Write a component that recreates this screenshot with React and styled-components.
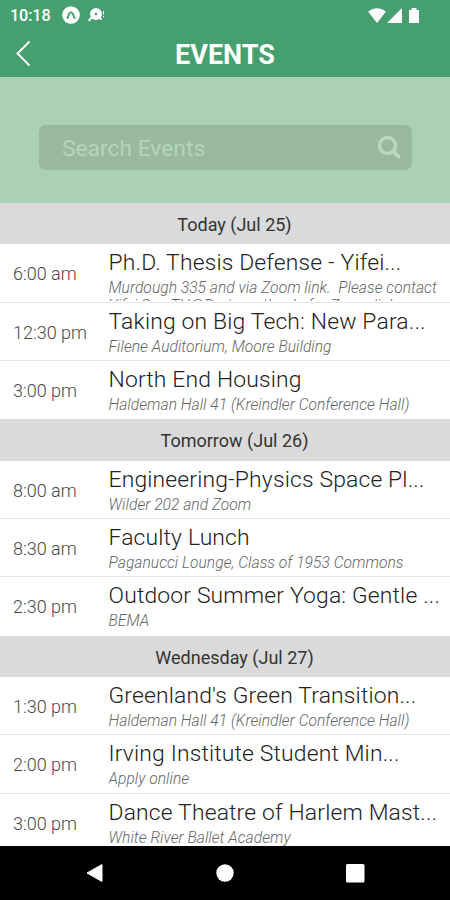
import React from "react";
import styled, { createGlobalStyle } from "styled-components";

const Global = createGlobalStyle`
  * { box-sizing: border-box; }
  body { margin: 0; background: #fff; font-family: Roboto, "Liberation Sans", sans-serif; }
`;
const Screen = styled.div`
  width: 450px; height: 900px; display: flex; flex-direction: column; overflow: hidden; background: #fff;
`;
const Header = styled.header`
  height: 76.5px; flex: none; background: #459f6e; color: #fff;
`;
const StatusBar = styled.div`
  height: 30px; display: flex; align-items: center; padding: 0 31px 0 10px;
`;
const Clock = styled.span`
  width: 52px; font-size: 16.2px; font-weight: 500; line-height: 30px; padding-top: 1px; letter-spacing: -0.1px;
`;
const StatusIcon = styled.svg`
  display: block; flex: none; margin-left: ${(p) => p.$gap || 0}px;
`;
const Spacer = styled.div`flex: 1;`;
const TitleBar = styled.div`
  height: 46px; display: grid; grid-template-columns: 50px 1fr 50px; align-items: center;
`;
const BackButton = styled.button`
  border: 0; padding: 0 0 0 15px; background: none; color: #fff; height: 46px; display: flex; align-items: center;
`;
const Title = styled.h1`
  margin: 0; padding-top: 3px; text-align: center; font-size: 27px; line-height: 44px; font-weight: 700; letter-spacing: 0;
`;
const SearchPanel = styled.div`
  height: 126.5px; flex: none; background: #aad1b3; padding: 48px 38px 0 39px;
`;
const SearchBox = styled.div`
  height: 45.5px; border-radius: 7px; background: #99b8a0; color: #b4d5bb;
  display: flex; align-items: center; justify-content: space-between; padding: 0 10px 0 23px;
  font-size: 22.8px; line-height: 46px;
`;
const Placeholder = styled.span`padding-top: 4px;`;
const Agenda = styled.main`
  height: 643px; flex: none; overflow: hidden;
`;
const DayHeading = styled.h2`
  margin: 0; height: 41.2px; background: #dadada; color: #333; text-align: center;
  font-size: 18px; font-weight: 400; line-height: 43px; padding-left: 19px;
`;
const EventRow = styled.article`
  height: 58.4px; overflow: hidden; display: grid; grid-template-columns: 108.5px 1fr;
  border-bottom: ${(p) => (p.$last ? "0" : "1.5px solid #e6e6e6")};
`;
const Time = styled.time`
  padding-left: 13px; font-size: 18px; font-weight: 300; line-height: 59px; color: #484848; white-space: nowrap;
`;
const Details = styled.div`min-width: 0; padding-top: 3px; height: 57px; overflow: hidden;`;
const EventTitle = styled.div`
  height: 30px; font-size: 22.9px; line-height: 32px; font-weight: 300; color: #222; white-space: nowrap;
  letter-spacing: 0.16px;
`;
const Place = styled.div`
  padding-top: 2px; font-size: 15.6px; line-height: 18px; font-style: italic; font-weight: 300; color: #666;
  letter-spacing: 0.03px; white-space: pre-line;
`;
const NavBar = styled.nav`
  flex: 1; background: #000; display: flex; justify-content: space-between; padding: 17px 85px 0;
`;

const days = [
  { name: "Today (Jul 25)", events: [
    ["6:00 am", "Ph.D. Thesis Defense - Yifei...", "Murdough 335 and via Zoom link.\u00a0 Please contact\nYifei.Sun.TH@Dartmouth.edu for Zoom link."],
    ["12:30 pm", "Taking on Big Tech: New Para...", "Filene Auditorium, Moore Building"],
    ["3:00 pm", "North End Housing", "Haldeman Hall 41 (Kreindler Conference Hall)"],
  ] },
  { name: "Tomorrow (Jul 26)", events: [
    ["8:00 am", "Engineering-Physics Space Pl...", "Wilder 202 and Zoom"],
    ["8:30 am", "Faculty Lunch", "Paganucci Lounge, Class of 1953 Commons"],
    ["2:30 pm", "Outdoor Summer Yoga: Gentle ...", "BEMA"],
  ] },
  { name: "Wednesday (Jul 27)", events: [
    ["1:30 pm", "Greenland's Green Transition...", "Haldeman Hall 41 (Kreindler Conference Hall)"],
    ["2:00 pm", "Irving Institute Student Min...", "Apply online"],
    ["3:00 pm", "Dance Theatre of Harlem Mast...", "White River Ballet Academy"],
  ] },
];

export default function App() {
  return (
    <Screen>
      <Global />
      <Header>
        <StatusBar>
          <Clock>10:18</Clock>
          <StatusIcon width="18" height="18" viewBox="0 0 18 18">
            <circle cx="9" cy="9" r="8.8" fill="#fff" />
            <path d="M5.5 12Q7.6 6.3 9 6.3T12.5 12" fill="none" stroke="#459f6e" strokeWidth="2" strokeLinecap="round" />
          </StatusIcon>
          <StatusIcon $gap={8} width="17" height="16" viewBox="0 0 17 16">
            <circle cx="8" cy="7" r="6" fill="#fff" />
            <circle cx="8" cy="7" r="1.3" fill="#459f6e" />
            <path d="M4 10 2.5 11.5M11 10l2 2" stroke="#fff" strokeWidth="2" strokeLinecap="round" />
            <circle cx="1.5" cy="13" r="1.2" fill="#fff" />
            <path d="M15.5 4v3.5M15.5 9v1.3" stroke="#fff" strokeWidth="1" />
          </StatusIcon>
          <Spacer />
          <StatusIcon width="18" height="15" viewBox="0 0 18 15"><path d="M0 3.4Q9-3 18 3.4L9 15z" fill="#fff" /></StatusIcon>
          <StatusIcon $gap={1} width="15" height="15" viewBox="0 0 15 15"><path d="M15 0v15H0z" fill="#fff" /></StatusIcon>
          <StatusIcon $gap={7} width="10" height="15" viewBox="0 0 10 15"><path d="M0 2h2.5V0h5v2H10v13H0z" fill="#fff" /></StatusIcon>
        </StatusBar>
        <TitleBar>
          <BackButton aria-label="Back">
            <svg width="17" height="28" viewBox="0 0 17 28"><path d="M14.5 1.5 2.5 13.5l12 12" fill="none" stroke="#fff" strokeWidth="2" /></svg>
          </BackButton>
          <Title>EVENTS</Title>
        </TitleBar>
      </Header>
      <SearchPanel>
        <SearchBox>
          <Placeholder>Search Events</Placeholder>
          <svg width="25" height="25" viewBox="0 0 25 25" fill="none" stroke="#b9d9bf">
            <circle cx="10.5" cy="10.5" r="8" strokeWidth="3.4" />
            <path d="m16.5 16.5 5 5" strokeWidth="4" strokeLinecap="round" />
          </svg>
        </SearchBox>
      </SearchPanel>
      <Agenda>
        {days.map((day) => (
          <section key={day.name}>
            <DayHeading>{day.name}</DayHeading>
            {day.events.map(([time, title, place], i) => (
              <EventRow key={title} $last={i === day.events.length - 1}>
                <Time>{time}</Time>
                <Details>
                  <EventTitle>{title}</EventTitle>
                  <Place>{place}</Place>
                </Details>
              </EventRow>
            ))}
          </section>
        ))}
      </Agenda>
      <NavBar>
        <svg width="19" height="20" viewBox="0 0 19 20"><path d="M17 1.5v17L2 10z" fill="#fff" stroke="#fff" strokeLinejoin="round" /></svg>
        <svg width="18" height="20" viewBox="0 0 18 20"><circle cx="9" cy="10" r="8.7" fill="#fff" /></svg>
        <svg width="19" height="20" viewBox="0 0 19 20"><rect y="1" width="18.5" height="18.5" rx="1.5" fill="#fff" /></svg>
      </NavBar>
    </Screen>
  );
}
